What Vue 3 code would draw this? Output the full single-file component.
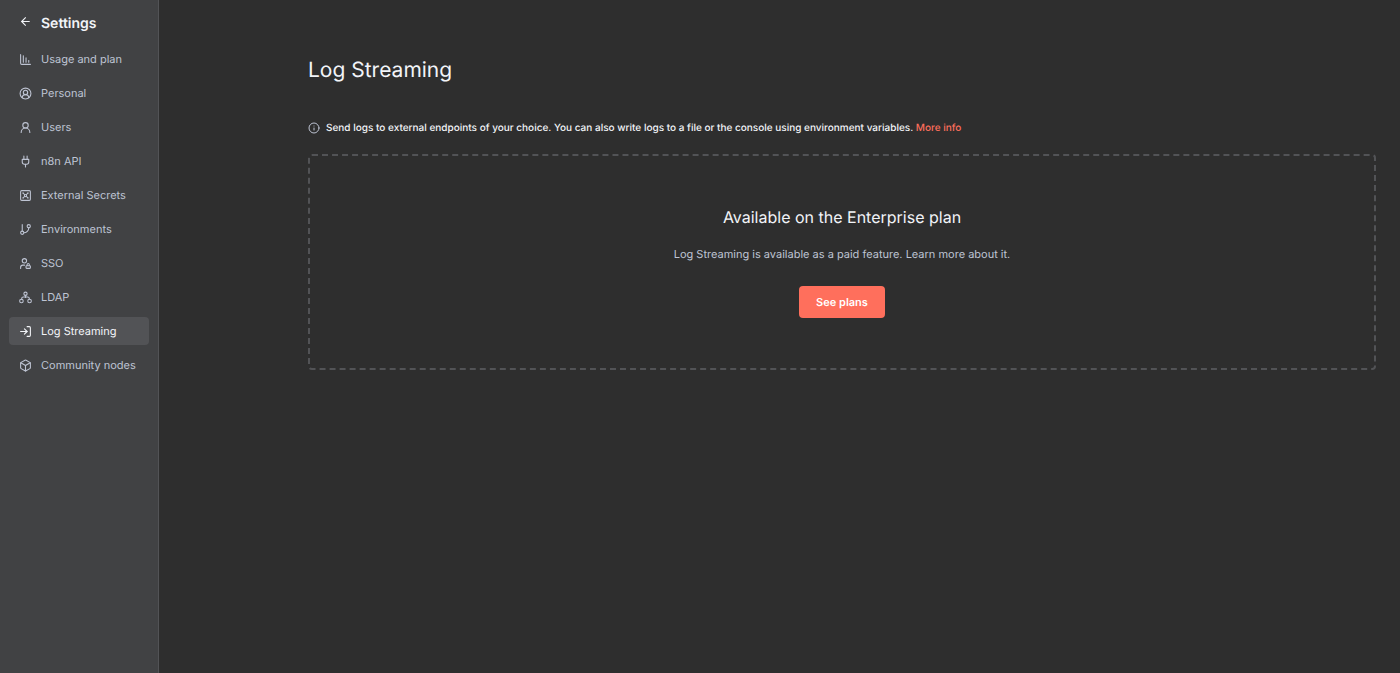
<script setup>
import { ref } from 'vue'

const active = ref('Log Streaming')

const items = [
  { label: 'Usage and plan', d: ['M3 3v16a2 2 0 0 0 2 2h16', 'M8 17V5', 'M13 17V9', 'M18 17v-3'] },
  { label: 'Personal', d: ['M18 20a6 6 0 0 0-12 0'], circles: [[12, 10, 4], [12, 12, 10]] },
  { label: 'Users', d: ['M20 21a8 8 0 0 0-16 0'], circles: [[12, 8, 5]] },
  { label: 'n8n API', d: ['M12 22v-5', 'M9 8V2', 'M15 8V2', 'M18 8v5a4 4 0 0 1-4 4h-4a4 4 0 0 1-4-4V8Z'] },
  {
    label: 'External Secrets',
    d: ['M5 3h14a2 2 0 0 1 2 2v14a2 2 0 0 1-2 2H5a2 2 0 0 1-2-2V5a2 2 0 0 1 2-2Z', 'm7.9 7.9 2.7 2.7', 'm13.4 10.6 2.7-2.7', 'm7.9 16.1 2.7-2.7', 'm13.4 13.4 2.7 2.7'],
    circles: [[7.5, 7.5, 0.5], [16.5, 7.5, 0.5], [7.5, 16.5, 0.5], [16.5, 16.5, 0.5], [12, 12, 2]],
  },
  { label: 'Environments', d: ['M6 3v12', 'M18 9a9 9 0 0 1-9 9'], circles: [[18, 6, 3], [6, 18, 3]] },
  {
    label: 'SSO',
    d: ['M10.3 15H7a4 4 0 0 0-4 4v2', 'M15 15.5V14a2 2 0 0 1 4 0v1.5', 'M14 16h6a1 1 0 0 1 1 1v3a1 1 0 0 1-1 1h-6a1 1 0 0 1-1-1v-3a1 1 0 0 1 1-1Z'],
    circles: [[10, 7, 4]],
  },
  { label: 'LDAP', d: ['M12 8v4', 'M5 15v-1a3 3 0 0 1 3-3h8a3 3 0 0 1 3 3v1'], circles: [[12, 5, 3], [4.5, 18.5, 3.3], [19.5, 18.5, 3.3]] },
  { label: 'Log Streaming', d: ['m10 17 5-5-5-5', 'M15 12H3', 'M15 3h4a2 2 0 0 1 2 2v14a2 2 0 0 1-2 2h-4'] },
  {
    label: 'Community nodes',
    d: ['M21 8a2 2 0 0 0-1-1.73l-7-4a2 2 0 0 0-2 0l-7 4A2 2 0 0 0 3 8v8a2 2 0 0 0 1 1.73l7 4a2 2 0 0 0 2 0l7-4A2 2 0 0 0 21 16Z', 'm3.3 7 8.7 5 8.7-5', 'M12 22V12'],
  },
]
</script>

<template>
  <div class="layout">
    <aside class="sidebar">
      <div class="sidebar-head">
        <button class="back" type="button" aria-label="Back">
          <svg class="icon" viewBox="0 0 24 24"><path d="m12 19-7-7 7-7" /><path d="M19 12H5" /></svg>
        </button>
        <h2>Settings</h2>
      </div>
      <nav class="menu">
        <a
          v-for="item in items"
          :key="item.label"
          href="#"
          class="item"
          :class="{ active: item.label === active }"
          @click.prevent="active = item.label"
        >
          <svg class="icon" viewBox="0 0 24 24" aria-hidden="true">
            <path v-for="d in item.d" :key="d" :d="d" />
            <circle v-for="(c, i) in item.circles" :key="i" :cx="c[0]" :cy="c[1]" :r="c[2]" />
          </svg>
          <span>{{ item.label }}</span>
        </a>
      </nav>
    </aside>

    <main class="content">
      <h1>Log Streaming</h1>
      <div class="notice">
        <svg class="icon info" viewBox="0 0 24 24" aria-hidden="true">
          <circle cx="12" cy="12" r="10" /><path d="M12 16v-4" /><path d="M12 8h.01" />
        </svg>
        <p>
          Send logs to external endpoints of your choice. You can also write logs to a file or the console using environment variables.
          <a href="#">More info</a>
        </p>
      </div>
      <section class="action-box">
        <h3>Available on the Enterprise plan</h3>
        <p>Log Streaming is available as a paid feature. Learn more about it.</p>
        <button type="button" class="primary">See plans</button>
      </section>
    </main>
  </div>
</template>

<style>
body {
  margin: 0;
  background: #2e2e2e;
}
</style>

<style scoped>
.layout {
  display: flex;
  min-height: 100vh;
  font-family: Inter, sans-serif;
  text-rendering: geometricPrecision;
  color: #f2f4f8;
}
h1, h2, h3, p {
  margin: 0;
}
.icon {
  width: 13px;
  height: 13px;
  flex: none;
  fill: none;
  stroke: currentColor;
  stroke-width: 2;
  stroke-linecap: round;
  stroke-linejoin: round;
}
.sidebar {
  box-sizing: border-box;
  width: 159px;
  flex: none;
  padding: 12px 9px;
  background: #414244;
  border-right: 1px solid #525356;
}
.sidebar-head {
  display: flex;
  align-items: center;
  gap: 9px;
  height: 22px;
  padding-left: 10px;
}
.back {
  display: flex;
  padding: 0 0 3px;
  border: 0;
  background: none;
  color: #f2f4f8;
}
h2 {
  font-size: 14px;
  line-height: 24px;
  padding-top: 1px;
  font-weight: 600;
}
.menu {
  display: flex;
  flex-direction: column;
  gap: 6px;
  margin-top: 11px;
}
.item {
  display: flex;
  align-items: center;
  gap: 9px;
  height: 28px;
  padding: 0 10px;
  border-radius: 4px;
  color: #bec4d3;
  font-size: 11px;
  line-height: 20px;
  text-decoration: none;
  white-space: nowrap;
}
.item.active {
  background: #525356;
  color: #f2f4f8;
}
.content {
  flex: 1;
  min-width: 0;
  padding: 55px 24px 48px 149px;
}
h1 {
  font-size: 21px;
  line-height: 32px;
  font-weight: 400;
}
.notice {
  display: flex;
  align-items: center;
  gap: 6px;
  margin-top: 33px;
  font-size: 10px;
  line-height: 16px;
  font-weight: 500;
}
.info {
  width: 12px;
  height: 12px;
  color: #bec4d3;
}
.notice a {
  color: #ff6f5c;
  text-decoration: none;
}
.action-box {
  display: flex;
  flex-direction: column;
  align-items: center;
  margin-top: 18px;
  padding: 48px 48px 50px;
  border: 2px dashed #525356;
  border-radius: 4px;
  text-align: center;
}
h3 {
  font-size: 16px;
  line-height: 26px;
  font-weight: 400;
}
.action-box p {
  margin: 14px 0 22px;
  color: #bec4d3;
  font-size: 11px;
  line-height: 20px;
}
.primary {
  height: 32px;
  padding: 0 17px;
  border: 0;
  border-radius: 4px;
  background: #ff6f5c;
  color: #fff;
  font: 600 11px/20px Inter, sans-serif;
  text-rendering: geometricPrecision;
}
</style>
